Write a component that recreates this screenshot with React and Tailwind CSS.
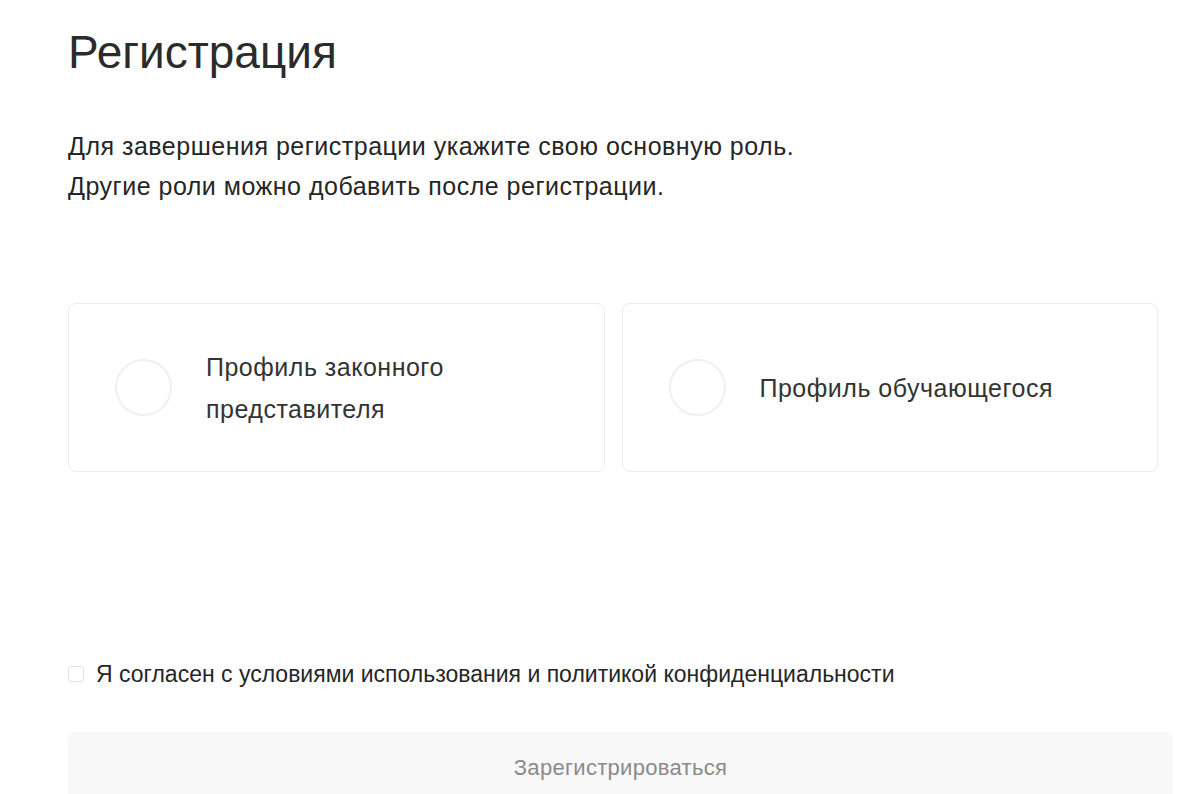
import { useState } from "react";

const roles = [
  { id: "parent", label: "Профиль законного представителя" },
  { id: "student", label: "Профиль обучающегося" },
];

export default function App() {
  const [role, setRole] = useState(null);
  const [agreed, setAgreed] = useState(false);

  return (
    <div
      className="min-h-screen bg-white text-[#333] pl-[68px] pr-[12px] pt-[24px]"
      style={{ fontFamily: '"Liberation Sans", Arial, sans-serif' }}
    >
      <h1 className="text-[46px] leading-[56px] text-[#2b2b2b]">Регистрация</h1>

      {/* описание */}
      <div className="mt-[46px] text-[25px] leading-[40px] tracking-[0.5px] text-[#262626]">
        <p>Для завершения регистрации укажите свою основную роль.</p>
        <p>Другие роли можно добавить после регистрации.</p>
      </div>

      {/* выбор роли */}
      <div className="mt-[97px] mr-[15px] grid grid-cols-2 gap-[17px]">
        {roles.map((r) => (
          <button
            key={r.id}
            onClick={() => setRole(r.id)}
            className="h-[169px] flex items-center gap-[34px] pl-[46px] pr-[40px] rounded-[8px] border border-[#ececec] bg-white text-left"
          >
            <span
              className={
                "shrink-0 w-[57px] h-[57px] rounded-full border-2 " +
                (role === r.id ? "border-[#9bb7e0]" : "border-[#f0f0f0]")
              }
            />
            <span className="text-[25px] leading-[42px] tracking-[0.5px] text-[#333] max-w-[300px]">
              {r.label}
            </span>
          </button>
        ))}
      </div>

      {/* согласие */}
      <label className="mt-[185px] flex items-center gap-[12px] cursor-pointer">
        <input
          type="checkbox"
          checked={agreed}
          onChange={(e) => setAgreed(e.target.checked)}
          className="appearance-none w-[16px] h-[16px] rounded-[3px] border border-[#e2e2e2] bg-white"
        />
        <span className="text-[23px] text-[#262626]">
          Я согласен с условиями использования и политикой конфиденциальности
        </span>
      </label>

      {/* кнопка */}
      <button
        disabled={!agreed || !role}
        className="mt-[40px] w-full h-[72px] rounded-[8px] bg-[#f8f8f8] text-[22px] tracking-[0.3px] text-[#8a8a8a]"
      >
        Зарегистрироваться
      </button>
    </div>
  );
}
